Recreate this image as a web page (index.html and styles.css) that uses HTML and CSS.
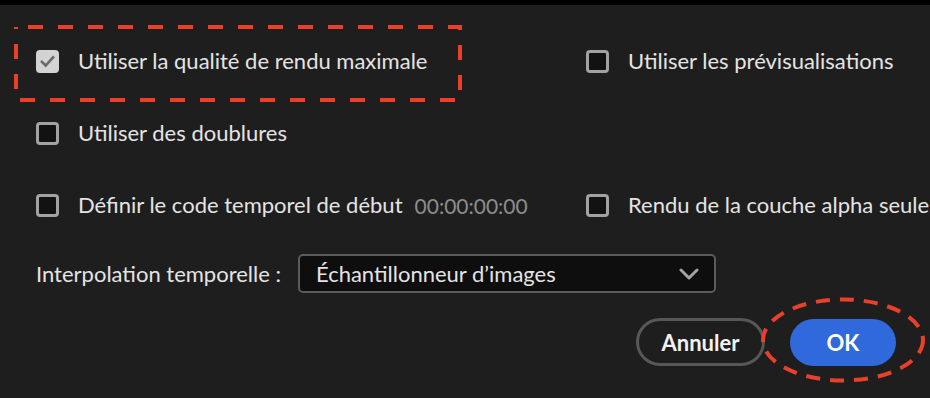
FILE: index.html
```html
<!DOCTYPE html>
<html lang="fr">
<head>
<meta charset="utf-8">
<title>Paramètres de rendu</title>
<link rel="stylesheet" href="styles.css">
</head>
<body>
<div class="topbar"></div>
<main class="dialog">
  <div class="options">
    <label class="option">
      <span class="box checked">
        <svg viewBox="0 0 23 23" width="17" height="17"><polyline points="4,12 9,17 19,6" fill="none" stroke="#6a6a6a" stroke-width="3.6" stroke-linecap="square" stroke-linejoin="miter"/></svg>
      </span>
      <span class="text">Utiliser la qualité de rendu maximale</span>
    </label>
    <label class="option">
      <span class="box"></span>
      <span class="text">Utiliser les prévisualisations</span>
    </label>
    <label class="option">
      <span class="box"></span>
      <span class="text">Utiliser des doublures</span>
    </label>
    <div class="option empty"></div>
    <label class="option">
      <span class="box"></span>
      <span class="text">Définir le code temporel de début</span>
      <span class="timecode">00:00:00:00</span>
    </label>
    <label class="option">
      <span class="box"></span>
      <span class="text">Rendu de la couche alpha seule</span>
    </label>
  </div>

  <div class="interp">
    <span class="text">Interpolation temporelle :</span>
    <div class="select">
      <span class="text">Échantillonneur d’images</span>
      <svg class="chev" viewBox="0 0 20 12" width="20" height="12"><polyline points="2,2 10,10 18,2" fill="none" stroke="#a3a3a3" stroke-width="3" stroke-linecap="round" stroke-linejoin="round"/></svg>
    </div>
  </div>

  <div class="actions">
    <button class="btn secondary">Annuler</button>
    <button class="btn primary">OK</button>
  </div>
</main>

<svg class="mark-rect" width="448" height="77" viewBox="0 0 448 77">
  <rect x="2" y="2" width="444" height="73" fill="none" stroke="#e8402a" stroke-width="4" stroke-dasharray="15 15" stroke-dashoffset="-12"/>
</svg>
<svg class="mark-ellipse" width="164" height="86" viewBox="0 0 164 86">
  <ellipse cx="82" cy="43" rx="80" ry="40.5" fill="none" stroke="#e8402a" stroke-width="4" stroke-dasharray="14 10"/>
</svg>
</body>
</html>
```

FILE: styles.css
```css
html, body {
  margin: 0;
  padding: 0;
}

body {
  width: 930px;
  height: 398px;
  overflow: hidden;
  background: #1e1e1e;
  color: #e4e4e4;
  font-family: Lato, "Liberation Sans", sans-serif;
  font-size: 22px;
  position: relative;
}

.topbar {
  height: 5px;
  background: #000;
}

.dialog {
  padding: 20px 34px 0 36px;
}

.options {
  display: grid;
  grid-template-columns: 550px 400px;
  grid-auto-rows: 72px;
}

.option {
  display: flex;
  align-items: center;
  white-space: nowrap;
}

.box {
  box-sizing: border-box;
  width: 23px;
  height: 23px;
  border: 3px solid #a2a2a2;
  border-radius: 4px;
  background: #121212;
  margin-right: 19px;
  flex: none;
  display: flex;
  align-items: center;
  justify-content: center;
}

.box.checked {
  background: #d3d3d3;
  border-color: #d3d3d3;
}

.text {
  line-height: 1;
}

.timecode {
  margin-left: 12px;
  color: #8d8d8d;
  font-size: 21px;
  line-height: 1;
}

.interp {
  display: flex;
  align-items: center;
  margin-top: 13px;
  white-space: nowrap;
}

.select {
  box-sizing: border-box;
  margin-left: 17px;
  width: 418px;
  height: 39px;
  border: 2px solid #5b5b5b;
  border-radius: 5px;
  background: #0e0e0e;
  display: flex;
  align-items: center;
  justify-content: space-between;
  padding: 0 15px 0 16px;
}

.chev {
  display: block;
}

.actions {
  display: flex;
  justify-content: flex-end;
  gap: 25px;
  margin-top: 25px;
}

.btn {
  box-sizing: border-box;
  height: 48px;
  border-radius: 24px;
  font-family: Lato, "Liberation Sans", sans-serif;
  font-weight: 700;
  font-size: 22px;
  color: #f2f2f2;
  padding: 0;
}

.btn.secondary {
  width: 129px;
  background: transparent;
  border: 3px solid #575757;
}

.btn.primary {
  width: 106px;
  height: 47px;
  margin-top: 1px;
  background: #3069dc;
  border: none;
  color: #fff;
}

.mark-rect {
  position: absolute;
  left: 14px;
  top: 25px;
}

.mark-ellipse {
  position: absolute;
  left: 761px;
  top: 297px;
}
```
